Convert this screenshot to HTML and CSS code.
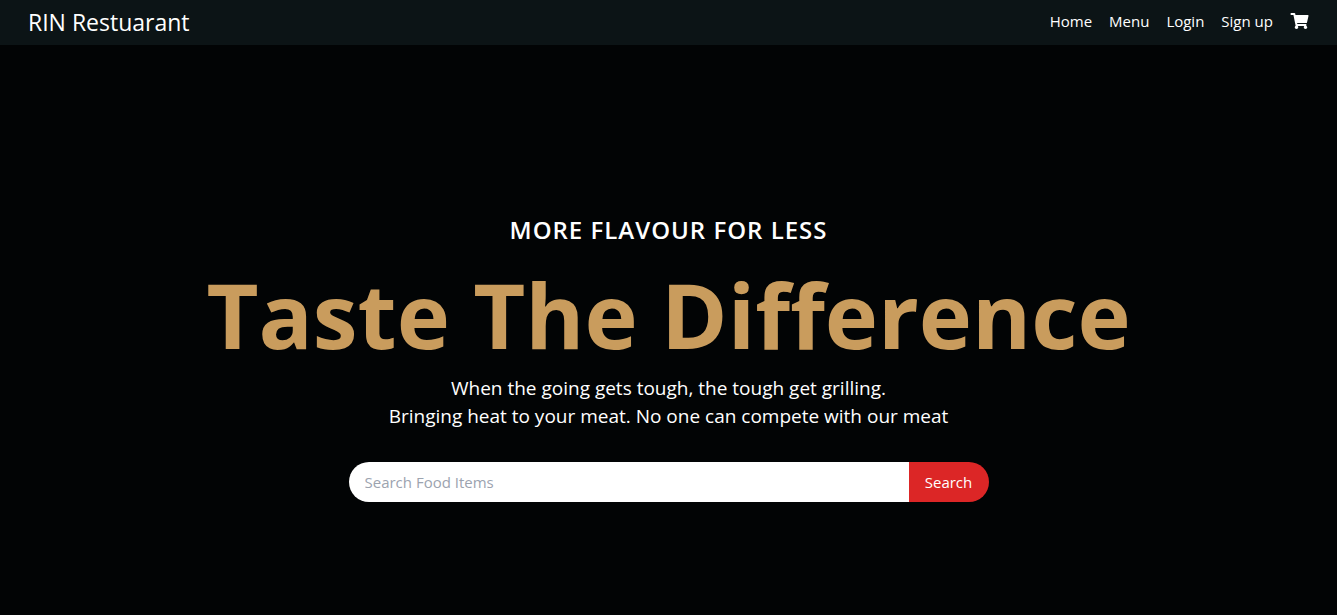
FILE: index.html
```html
<!DOCTYPE html>
<html lang="en">
<head>
  <meta charset="utf-8">
  <meta name="viewport" content="width=device-width, initial-scale=1">
  <title>RIN Restuarant</title>
  <link rel="stylesheet" href="styles.css">
</head>
<body>
  <header class="navbar">
    <a class="brand" href="#">RIN Restuarant</a>
    <nav class="nav-links">
      <a href="#">Home</a>
      <a href="#">Menu</a>
      <a href="#">Login</a>
      <a href="#">Sign up</a>
      <a class="cart" href="#" aria-label="Cart">
        <svg class="cart-icon" viewBox="0 0 576 512" aria-hidden="true"><path fill="currentColor" d="M528.12 301.319l47.273-208C578.806 78.301 567.391 64 551.99 64H159.208l-9.166-44.81C147.758 8.021 137.93 0 126.529 0H24C10.745 0 0 10.745 0 24v16c0 13.255 10.745 24 24 24h69.883l70.248 343.435C147.325 417.1 136 435.222 136 456c0 30.928 25.072 56 56 56s56-25.072 56-56c0-15.674-6.447-29.835-16.824-40h209.647C430.447 426.165 424 440.326 424 456c0 30.928 25.072 56 56 56s56-25.072 56-56c0-22.172-12.888-41.332-31.579-50.405l5.517-24.276c3.413-15.018-8.002-29.319-23.403-29.319H218.117l-6.545-32h293.145c11.206 0 20.92-7.754 23.403-18.681z"/></svg>
      </a>
    </nav>
  </header>
  <main class="hero">
    <h2 class="tagline">MORE FLAVOUR FOR LESS</h2>
    <h1 class="headline">Taste The Difference</h1>
    <p class="blurb">When the going gets tough, the tough get grilling.<br>Bringing heat to your meat. No one can compete with our meat</p>
    <form class="search">
      <input class="search-input" type="search" placeholder="Search Food Items" aria-label="Search Food Items">
      <button class="search-button" type="submit">Search</button>
    </form>
  </main>
</body>
</html>
```

FILE: styles.css
```css
* {
  box-sizing: border-box;
  margin: 0;
}

body {
  min-height: 100vh;
  display: flex;
  flex-direction: column;
  background: #020405;
  color: #fff;
  font-family: "Segoe UI", "Open Sans", "Noto Sans", sans-serif;
  font-size: 15px;
  line-height: 24px;
}

a {
  color: inherit;
  text-decoration: none;
}

.navbar {
  display: flex;
  align-items: center;
  justify-content: space-between;
  padding: 6px 28px 7px;
  background: #0c1416;
}

.brand {
  font-size: 23px;
  line-height: 32px;
}

.nav-links {
  display: flex;
  align-items: center;
  gap: 17px;
  padding-bottom: 2px;
}

.cart {
  display: flex;
}

.cart-icon {
  width: 19px;
  height: 16px;
}

.hero {
  flex: 1;
  display: flex;
  flex-direction: column;
  align-items: center;
  justify-content: center;
  padding: 72px 16px 16px;
  text-align: center;
}

.tagline {
  font-size: 24px;
  font-weight: 600;
  line-height: 32px;
  letter-spacing: 1px;
}

.headline {
  padding: 20px 0 12px;
  color: #c99c5d;
  font-size: 90px;
  font-weight: 700;
  line-height: 96px;
}

.blurb {
  font-size: 19px;
  line-height: 28px;
}

.search {
  display: flex;
  width: 100%;
  max-width: 640px;
  margin-top: 32px;
  border-radius: 20px;
  overflow: hidden;
}

.search-input,
.search-button {
  height: 40px;
  padding: 0 16px;
  border: 0;
  font: inherit;
}

.search-input {
  flex: 1;
  min-width: 0;
  background: #fff;
  color: #111827;
  appearance: none;
  outline: none;
}

.search-input::placeholder {
  color: #9ca3af;
  opacity: 1;
}

.search-button {
  width: 80px;
  background: #dc2626;
  color: #fff;
  cursor: pointer;
}
```
